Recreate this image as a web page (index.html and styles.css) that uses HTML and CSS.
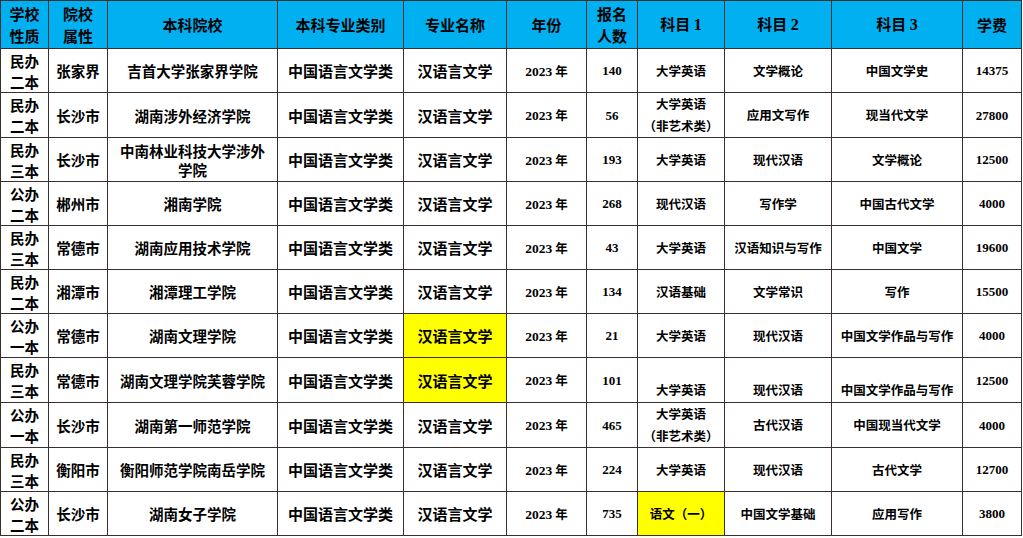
FILE: index.html
```html
<!DOCTYPE html>
<html lang="zh-CN">
<head>
<meta charset="utf-8">
<title>汉语言文学 专升本</title>
<link rel="stylesheet" href="styles.css">
</head>
<body>
<table class="grid">
  <colgroup>
    <col class="c1"><col class="c2"><col class="c3"><col class="c4"><col class="c5"><col class="c6"><col class="c7"><col class="c8"><col class="c9"><col class="c10"><col class="c11">
  </colgroup>
  <thead>
    <tr>
      <th>学校<br>性质</th>
      <th>院校<br>属性</th>
      <th>本科院校</th>
      <th>本科专业类别</th>
      <th>专业名称</th>
      <th>年份</th>
      <th>报名<br>人数</th>
      <th>科目 <span class="num">1</span></th>
      <th>科目 <span class="num">2</span></th>
      <th>科目 <span class="num">3</span></th>
      <th>学费</th>
    </tr>
  </thead>
  <tbody>
    <tr>
      <td class="type">民办<br>二本</td><td class="city">张家界</td><td class="school">吉首大学张家界学院</td><td class="major">中国语言文学类</td><td class="major">汉语言文学</td><td class="year"><span class="num">2023</span> 年</td><td class="num">140</td><td class="subj">大学英语</td><td class="subj">文学概论</td><td class="subj">中国文学史</td><td class="num">14375</td>
    </tr>
    <tr>
      <td class="type">民办<br>二本</td><td class="city">长沙市</td><td class="school">湖南涉外经济学院</td><td class="major">中国语言文学类</td><td class="major">汉语言文学</td><td class="year"><span class="num">2023</span> 年</td><td class="num">56</td><td class="subj">大学英语<br>（非艺术类）</td><td class="subj">应用文写作</td><td class="subj">现当代文学</td><td class="num">27800</td>
    </tr>
    <tr>
      <td class="type">民办<br>三本</td><td class="city">长沙市</td><td class="school tight">中南林业科技大学涉外<br>学院</td><td class="major">中国语言文学类</td><td class="major">汉语言文学</td><td class="year"><span class="num">2023</span> 年</td><td class="num">193</td><td class="subj">大学英语</td><td class="subj">现代汉语</td><td class="subj">文学概论</td><td class="num">12500</td>
    </tr>
    <tr>
      <td class="type">公办<br>二本</td><td class="city">郴州市</td><td class="school">湘南学院</td><td class="major">中国语言文学类</td><td class="major">汉语言文学</td><td class="year"><span class="num">2023</span> 年</td><td class="num">268</td><td class="subj">现代汉语</td><td class="subj">写作学</td><td class="subj">中国古代文学</td><td class="num">4000</td>
    </tr>
    <tr>
      <td class="type">民办<br>三本</td><td class="city">常德市</td><td class="school">湖南应用技术学院</td><td class="major">中国语言文学类</td><td class="major">汉语言文学</td><td class="year"><span class="num">2023</span> 年</td><td class="num">43</td><td class="subj">大学英语</td><td class="subj">汉语知识与写作</td><td class="subj">中国文学</td><td class="num">19600</td>
    </tr>
    <tr>
      <td class="type">民办<br>二本</td><td class="city">湘潭市</td><td class="school">湘潭理工学院</td><td class="major">中国语言文学类</td><td class="major">汉语言文学</td><td class="year"><span class="num">2023</span> 年</td><td class="num">134</td><td class="subj">汉语基础</td><td class="subj">文学常识</td><td class="subj">写作</td><td class="num">15500</td>
    </tr>
    <tr>
      <td class="type">公办<br>一本</td><td class="city">常德市</td><td class="school">湖南文理学院</td><td class="major">中国语言文学类</td><td class="major hl">汉语言文学</td><td class="year"><span class="num">2023</span> 年</td><td class="num">21</td><td class="subj">大学英语</td><td class="subj">现代汉语</td><td class="subj">中国文学作品与写作</td><td class="num">4000</td>
    </tr>
    <tr>
      <td class="type">民办<br>三本</td><td class="city">常德市</td><td class="school">湖南文理学院芙蓉学院</td><td class="major">中国语言文学类</td><td class="major hl">汉语言文学</td><td class="year"><span class="num">2023</span> 年</td><td class="num">101</td><td class="subj bottom">大学英语</td><td class="subj bottom">现代汉语</td><td class="subj bottom">中国文学作品与写作</td><td class="num">12500</td>
    </tr>
    <tr>
      <td class="type">公办<br>一本</td><td class="city">长沙市</td><td class="school">湖南第一师范学院</td><td class="major">中国语言文学类</td><td class="major">汉语言文学</td><td class="year"><span class="num">2023</span> 年</td><td class="num">465</td><td class="subj">大学英语<br>（非艺术类）</td><td class="subj">古代汉语</td><td class="subj">中国现当代文学</td><td class="num">4000</td>
    </tr>
    <tr>
      <td class="type">民办<br>三本</td><td class="city">衡阳市</td><td class="school">衡阳师范学院南岳学院</td><td class="major">中国语言文学类</td><td class="major">汉语言文学</td><td class="year"><span class="num">2023</span> 年</td><td class="num">224</td><td class="subj">大学英语</td><td class="subj">现代汉语</td><td class="subj">古代文学</td><td class="num">12700</td>
    </tr>
    <tr>
      <td class="type">公办<br>二本</td><td class="city">长沙市</td><td class="school">湖南女子学院</td><td class="major">中国语言文学类</td><td class="major">汉语言文学</td><td class="year"><span class="num">2023</span> 年</td><td class="num">735</td><td class="subj hl">语文（一）</td><td class="subj">中国文学基础</td><td class="subj">应用写作</td><td class="num">3800</td>
    </tr>
  </tbody>
</table>
</body>
</html>
```

FILE: styles.css
```css
html, body {
  margin: 0;
  padding: 0;
  background: #ffffff;
}

body {
  font-family: "Noto Sans CJK SC", "Noto Sans", sans-serif;
  color: #000000;
}

.grid {
  border-collapse: collapse;
  table-layout: fixed;
  width: 1022px;
}

.c1 { width: 48px; }
.c2 { width: 59px; }
.c3 { width: 170px; }
.c4 { width: 126px; }
.c5 { width: 103px; }
.c6 { width: 80px; }
.c7 { width: 51px; }
.c8 { width: 87px; }
.c9 { width: 107px; }
.c10 { width: 131px; }
.c11 { width: 59px; }

.grid th,
.grid td {
  border: 1px solid #3a3030;
  padding: 0 1px;
  text-align: center;
  vertical-align: middle;
  font-weight: 700;
  overflow: hidden;
  white-space: nowrap;
}

.grid th {
  background: #00b0f0;
  height: 47px;
  font-size: 15px;
  line-height: 22px;
}

.grid td {
  height: 43px;
  font-size: 14.5px;
  line-height: 21px;
}

.grid td.major {
  font-size: 15px;
}

.grid td.tight {
  line-height: 19px;
}

.grid td.subj {
  font-size: 12.5px;
  line-height: 22px;
}

.grid td.bottom {
  vertical-align: bottom;
  padding-bottom: 1px;
}

.grid td.year {
  font-size: 12.5px;
}

.num {
  font-family: "Liberation Serif", "DejaVu Serif", serif;
  font-weight: 700;
}

.grid td.num {
  font-size: 13px;
}

.grid th .num {
  font-size: 16px;
}

.year .num {
  font-size: 13.5px;
}

.grid td.hl {
  background: #ffff00;
}
```
